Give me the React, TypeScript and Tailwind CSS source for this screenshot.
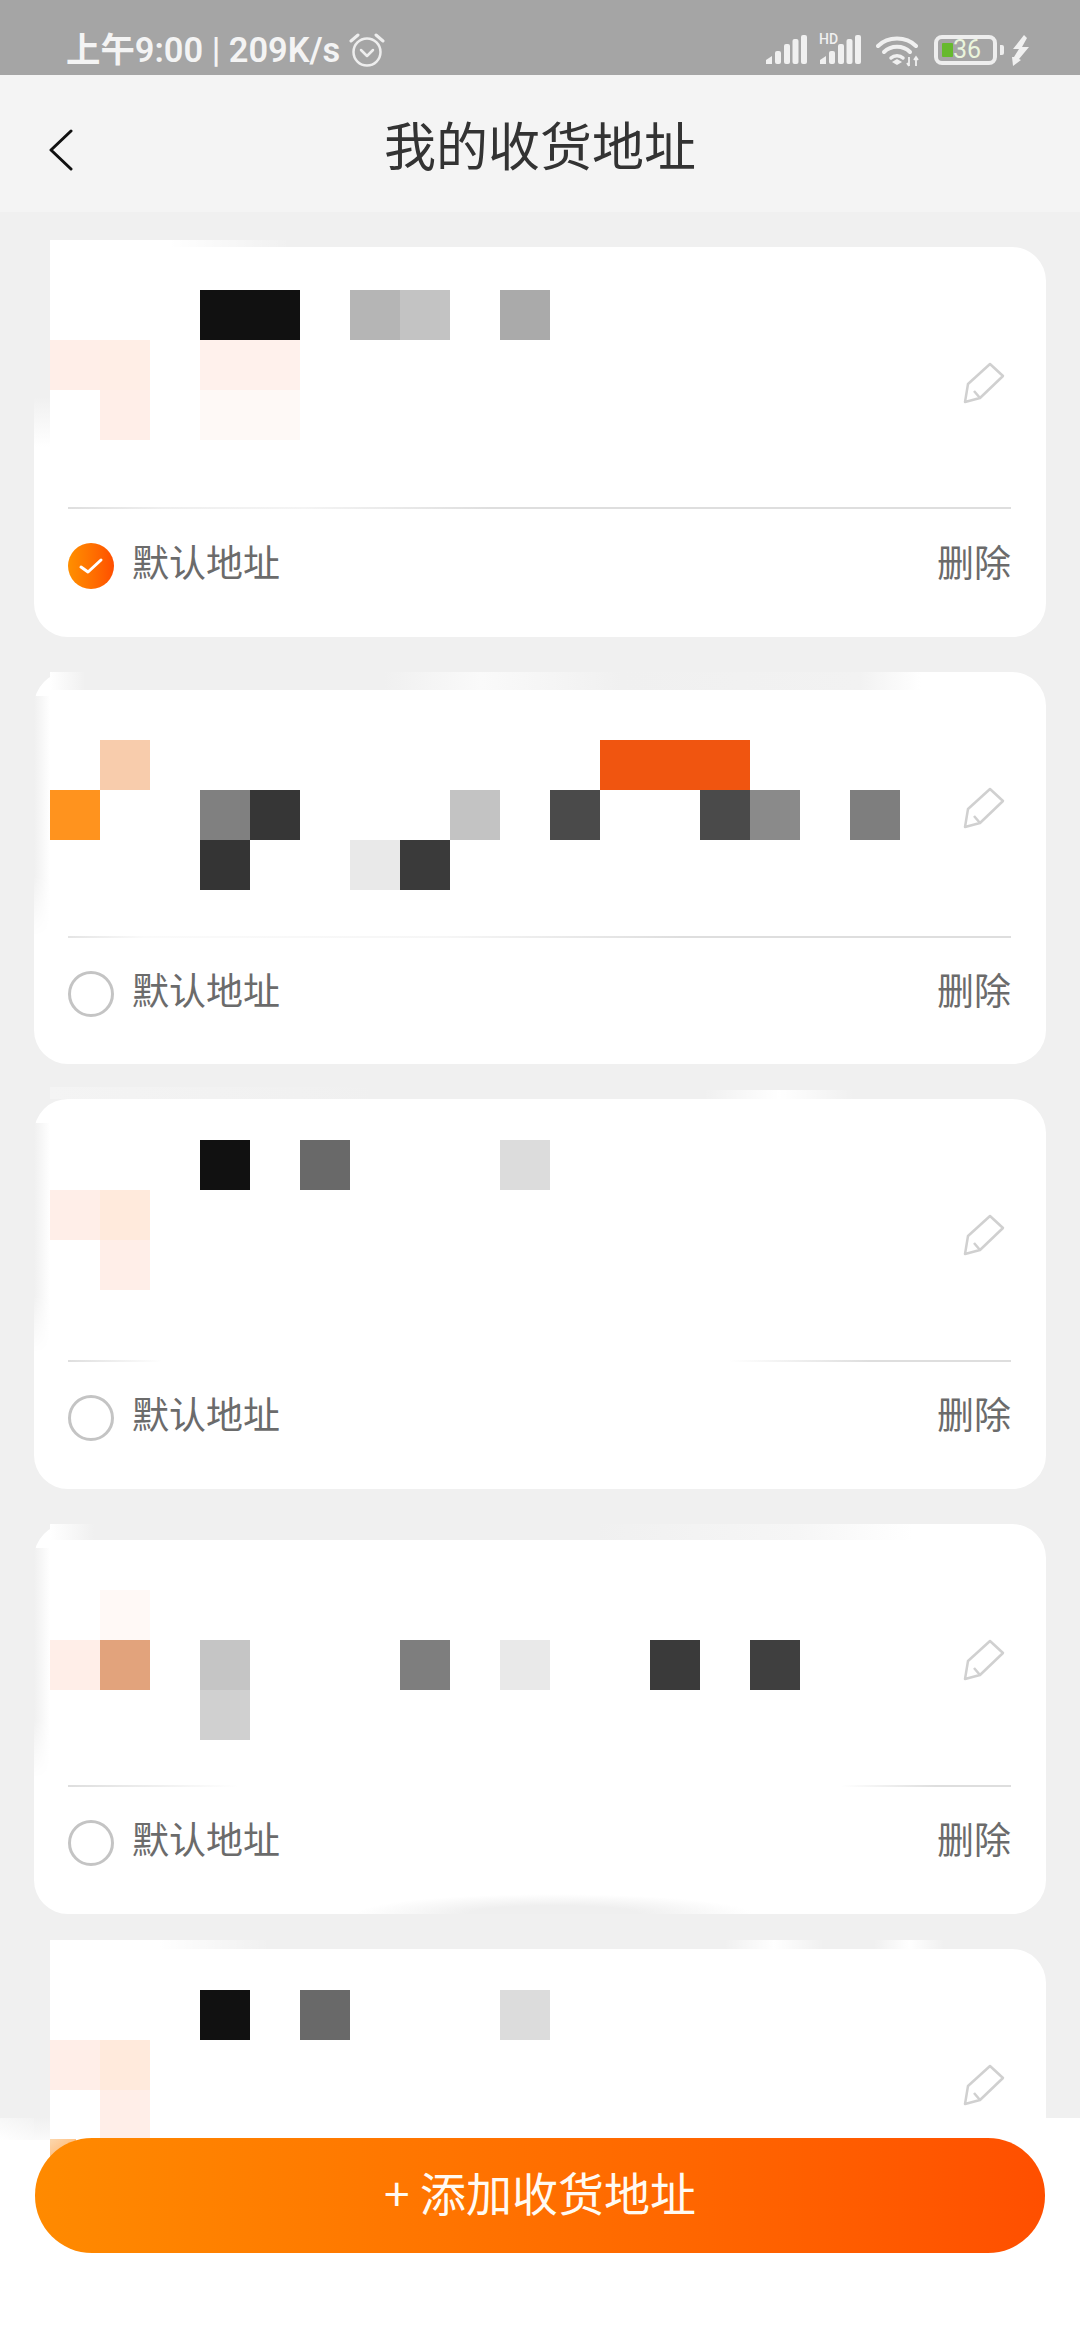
const cardList = [
  {
    checked: true,
    topClass: "h-[260px]",
    cardClass: "h-[390px]",
    gridClass: "pt-[43px]",
    footClass: "pt-[34px]",
    lineClass: "bg-[linear-gradient(to_right,#dedede_0,#efefef_10%,#f4f4f4_25%,#dedede_45%)]",
    rows: [
      { 3: "#111111", 4: "#111111", 6: "#b5b5b5", 7: "#c3c3c3", 9: "#aaaaaa" },
      { 0: "#ffeee8", 1: "#ffeee6", 3: "#fff1ec", 4: "#fff1ec" },
      { 1: "#ffeee8", 3: "#fef9f6", 4: "#fef9f6" },
    ] as Record<number, string>[],
  },
  {
    checked: false,
    topClass: "h-[264px]",
    cardClass: "h-[392px]",
    gridClass: "pt-[68px]",
    footClass: "pt-[33px]",
    lineClass: "bg-[linear-gradient(to_right,#e4e4e4_0,#fafafa_8%,#f6f6f6_40%,#dedede_65%)]",
    rows: [
      { 1: "#f8ccac", 11: "#f05510", 12: "#f05510", 13: "#f05510" },
      { 0: "#ff931e", 3: "#808080", 4: "#363636", 8: "#c3c3c3", 10: "#4a4a4a", 13: "#4a4a4a", 14: "#8a8a8a", 16: "#7e7e7e" },
      { 3: "#343434", 6: "#e9e9e9", 7: "#3a3a3a" },
    ] as Record<number, string>[],
  },
  {
    checked: false,
    topClass: "h-[261px]",
    cardClass: "h-[390px]",
    gridClass: "pt-[41px]",
    footClass: "pt-[33px]",
    lineClass: "bg-[linear-gradient(to_right,#dedede_0,#ffffff_10%,#ffffff_70%,#dedede_85%)]",
    rows: [
      { 3: "#111111", 5: "#696969", 9: "#dcdcdc" },
      { 0: "#ffeee8", 1: "#ffeadc" },
      { 1: "#ffeee8" },
    ] as Record<number, string>[],
  },
  {
    checked: false,
    topClass: "h-[261px]",
    cardClass: "h-[390px]",
    gridClass: "pt-[66px]",
    footClass: "pt-[33px]",
    lineClass: "bg-[linear-gradient(to_right,#dedede_0,#ffffff_18%,#ffffff_82%,#dedede_92%)]",
    rows: [
      { 1: "#fff9f6" },
      { 0: "#ffeee8", 1: "#e2a37c", 3: "#c5c5c5", 7: "#7e7e7e", 9: "#e9e9e9", 12: "#3a3a3a", 14: "#3f3f3f" },
      { 3: "#d0d0d0" },
    ] as Record<number, string>[],
  },
  {
    checked: false,
    topClass: "h-[261px]",
    cardClass: "h-[390px]",
    gridClass: "pt-[41px]",
    footClass: "",
    lineClass: "",
    rows: [
      { 3: "#111111", 5: "#696969", 9: "#dcdcdc" },
      { 0: "#ffeee8", 1: "#ffeadc" },
      { 1: "#ffeee8" },
    ] as Record<number, string>[],
  },
];

// leftover smears round the blurred address blocks
const smudges = [
  [
    "left-4 -top-[7px] w-[240px] h-[30px] bg-linear-to-r from-white via-white to-transparent",
    "left-0 top-0 w-4 h-[200px] bg-[linear-gradient(to_bottom,#f0f0f0_75%,#ffffff_100%)]",
  ],
  [
    "left-4 top-0 w-[880px] h-[18px] bg-[linear-gradient(to_right,#ffffff_0,#f0f0f0_4%,#f0f0f0_38%,#fafafa_49%,#f0f0f0_65%,#f2f2f2_92%,#ffffff_99%)]",
    "left-0 top-[24px] w-4 h-[240px] bg-linear-to-r from-[#f0f0f0] to-white [mask-image:linear-gradient(to_bottom,#000_75%,transparent)]",
  ],
  [
    "left-[670px] -top-[9px] w-[150px] h-[9px] bg-linear-to-r from-transparent via-white to-transparent",
    "left-[16px] -top-[12px] w-[330px] h-[12px] bg-linear-to-r from-[#f4f4f4] to-transparent",
    "left-0 top-[24px] w-4 h-[230px] bg-linear-to-r from-[#f0f0f0] to-white [mask-image:linear-gradient(to_bottom,#000_75%,transparent)]",
  ],
  [
    "left-4 top-0 w-[880px] h-[16px] bg-[linear-gradient(to_right,#ffffff_0,#f0f0f0_5%,#f0f0f0_62%,#f6f6f6_85%,#ffffff_98%)]",
    "left-0 top-[24px] w-4 h-[230px] bg-linear-to-r from-[#f0f0f0] to-white [mask-image:linear-gradient(to_bottom,#000_75%,transparent)]",
    "left-[320px] bottom-0 w-[400px] h-[20px] bg-[radial-gradient(ellipse_at_bottom,#efefef_0,#efefef_30%,transparent_70%)]",
  ],
  [
    "left-4 -top-[9px] w-[220px] h-[30px] bg-linear-to-r from-white via-white to-transparent",
    "left-[690px] -top-[9px] w-[100px] h-[9px] bg-linear-to-r from-transparent via-white to-transparent",
    "left-[840px] -top-[9px] w-[70px] h-[9px] bg-linear-to-r from-transparent via-white to-transparent",
    "left-0 top-0 w-4 h-[191px] bg-[linear-gradient(to_bottom,#f0f0f0_88%,#fafafa_100%)]",
  ],
];

const Cell = ({ color }: { color?: string }) => (
  <div style={color ? { backgroundColor: color } : undefined} />
);

const Pencil = () => (
  <svg width="42" height="42" viewBox="0 0 42 42" fill="none" className="mt-[115px] ml-[13px] shrink-0">
    <path
      d="M27 2 L40 14 L17 36 L2 40 L5 22 Z M11 29 L17 36"
      stroke="#d0d0d0"
      strokeWidth="2.5"
      strokeLinejoin="round"
    />
  </svg>
);

const CheckMark = ({ checked }: { checked: boolean }) =>
  checked ? (
    <span className="flex h-[46px] w-[46px] items-center justify-center rounded-full bg-linear-to-r from-[#ff8f00] to-[#ff4e00]">
      <svg width="26" height="20" viewBox="0 0 26 20" fill="none">
        <path d="M3 11 L10 16 L23 4" stroke="#fff" strokeWidth="3" strokeLinecap="round" strokeLinejoin="round" />
      </svg>
    </span>
  ) : (
    <span className="h-[46px] w-[46px] rounded-full border-[3px] border-[#c4c4c4]" />
  );

const AddressCard = ({ card, marks, footer }: { card: (typeof cardList)[number]; marks: string[]; footer: boolean }) => (
  <div className={`relative shrink-0 rounded-[34px] bg-white ${card.cardClass}`}>
    {marks.map((m) => (
      <div key={m} className={`absolute ${m}`} />
    ))}
    <div className={`relative flex pl-4 ${card.topClass}`}>
      <div className={card.gridClass}>
        <div className="grid w-[900px] grid-cols-[repeat(18,50px)] auto-rows-[50px]">
          {card.rows.flatMap((row, r) =>
            Array.from({ length: 18 }, (_, c) => <Cell key={`${r}-${c}`} color={row[c]} />)
          )}
        </div>
      </div>
      <Pencil />
    </div>
    {footer && (
      <div className="relative pl-[34px] pr-[35px]">
        <div className={`h-[2px] ${card.lineClass}`} />
        <div className={`flex items-start justify-between text-[37px] leading-[46px] text-[#6b6b6b] ${card.footClass}`}>
          <div className="flex items-start gap-[18px]">
            <CheckMark checked={card.checked} />
            <span className="-mt-[5px]">默认地址</span>
          </div>
          <span className="-mt-[5px]">删除</span>
        </div>
      </div>
    )}
  </div>
);

const SignalBars = () => (
  <svg width="41" height="29" viewBox="0 0 41 29" fill="#f0f0f0">
    <path d="M0 29 V25 L6 21 V29 Z" />
    <rect x="9" y="16" width="6" height="13" rx="2" />
    <rect x="18" y="9" width="6" height="20" rx="2" />
    <rect x="26.5" y="4" width="6" height="25" rx="2" />
    <rect x="35" y="0" width="6" height="29" rx="2" />
  </svg>
);

const StatusIcons = () => (
  <div className="flex items-start">
    <div className="mt-[35px]">
      <SignalBars />
    </div>
    <div className="relative ml-[13px] mt-[35px]">
      <span className="absolute -left-[1px] -top-[3px] font-['Roboto',sans-serif] text-[14px] font-medium leading-[14px] text-[#f0f0f0]">
        HD
      </span>
      <SignalBars />
    </div>
    <svg width="44" height="32" viewBox="0 0 44 32" fill="none" className="ml-[15px] mt-[35px]">
      <path d="M2 11 C12 1 30 1 40 11" stroke="#f0f0f0" strokeWidth="4" strokeLinecap="round" />
      <path d="M8 17 C15 10 27 10 34 17" stroke="#f0f0f0" strokeWidth="4" strokeLinecap="round" />
      <path d="M15 23 C18 20 24 20 27 23" stroke="#f0f0f0" strokeWidth="3.5" strokeLinecap="round" />
      <path d="M16 27 L21 24 L26 27 L21 30 Z" fill="#f0f0f0" />
      <path d="M33 22 V31 M31 28 L33 31 M40 22 V31 M38 25 L40 22 L42 25" stroke="#f0f0f0" strokeWidth="1.8" />
    </svg>
    <div className="ml-[14px] mt-[35px] flex items-center">
      <div className="flex h-[30px] w-[63px] items-center rounded-[8px] border-[4px] border-[#eeeeee] pl-1">
        <span className="h-[14px] w-[11px] rounded-[1px] bg-[#66b92e]" />
        <span className="font-['Roboto',sans-serif] text-[25px] leading-[22px] text-[#eaf5dc]">36</span>
      </div>
      <span className="ml-[3px] h-[10px] w-[4px] rounded-r-[2px] bg-[#eeeeee]" />
    </div>
    <svg width="18" height="31" viewBox="0 0 18 31" fill="#f0f0f0" className="ml-[8px] mt-[35px]">
      <path d="M12 0 L1 14 H7 L2 22 L0 22 L1 31 L9 25 L7 24 L17 12 H10 L15 3 Z" />
    </svg>
  </div>
);

export default function App() {
  return (
    <div className="relative flex h-[2340px] w-[1080px] flex-col overflow-hidden bg-[#f0f0f0] font-['Noto_Sans_CJK_SC','Noto_Sans',sans-serif]">
      <div className="flex h-[75px] shrink-0 justify-between bg-[#a5a5a5] pl-[66px] pr-[50px]">
        <div className="flex items-start">
          <span className="mt-[28px] font-['Roboto','Noto_Sans_CJK_SC',sans-serif] text-[34.4px] font-semibold leading-[44px] text-[#f4f4f4]">
            上午9:00 | 209K/s
          </span>
          <svg width="36" height="36" viewBox="0 0 36 36" fill="none" className="ml-[9px] mt-[32px]" stroke="#eeeeee">
            <circle cx="18" cy="20" r="13.5" strokeWidth="2.5" />
            <path d="M12 18 L18 24 L24 18" strokeWidth="2.5" strokeLinecap="round" strokeLinejoin="round" />
            <path d="M2 9 L9 3 M27 3 L34 9" strokeWidth="3" strokeLinecap="round" />
          </svg>
        </div>
        <StatusIcons />
      </div>

      <div className="relative flex h-[137px] shrink-0 items-center justify-center bg-[#f4f4f4]">
        <svg width="24" height="42" viewBox="0 0 24 42" fill="none" className="absolute left-[49px] top-[54px]">
          <path d="M22 2 L2 21 L22 40" stroke="#111" strokeWidth="3" strokeLinecap="round" strokeLinejoin="round" />
        </svg>
        <span className="text-[52px] leading-[70px] text-[#333333]">我的收货地址</span>
      </div>

      <div className="relative z-10 -mb-[22px] flex h-[1928px] shrink-0 flex-col gap-[35px] overflow-hidden px-[34px] pt-[35px]">
        {cardList.map((card, i) => (
          <AddressCard key={i} card={card} marks={smudges[i]} footer={i < 4} />
        ))}
      </div>

      <div className="relative flex flex-1 items-start justify-center bg-white px-[34px] pt-[20px]">
        <div className="absolute left-0 top-0 h-[22px] w-[50px] bg-linear-to-bl from-[#f0f0f0] to-white" />
        <div className="absolute left-[50px] top-[21px] z-[15] h-[18px] w-[26px] bg-linear-to-br from-[#fcd7ae] to-[#ffb060]" />
        <button className="relative z-20 flex h-[115px] w-[1010px] items-center justify-center rounded-[57px] bg-linear-to-r from-[#ff8a00] to-[#ff4f00] pb-[10px] text-[46px] leading-[60px] text-[#fffaf2]">
          + 添加收货地址
        </button>
      </div>
    </div>
  );
}
